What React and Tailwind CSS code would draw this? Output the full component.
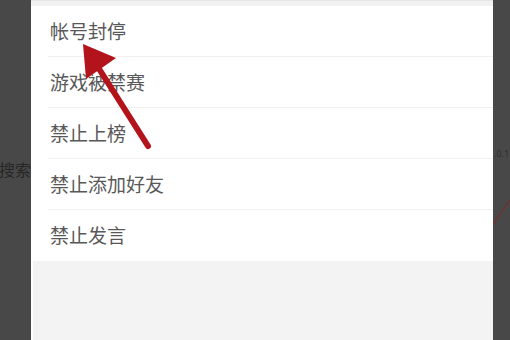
import React from "react";

const items = ["帐号封停", "游戏被禁赛", "禁止上榜", "禁止添加好友", "禁止发言"];

export default function App() {
  return (
    <div
      className="relative w-[510px] h-[340px] overflow-hidden bg-[#484848] flex"
      style={{ fontFamily: '"Noto Sans", "Noto Sans CJK SC", sans-serif' }}
    >
      {/* left strip */}
      <div className="w-[31px] shrink-0 flex flex-col overflow-hidden">
        <div className="h-[160px]" />
        <div className="flex justify-end whitespace-nowrap text-[16px] leading-[20px] text-[#262626]">
          搜索
        </div>
      </div>

      {/* panel */}
      <div className="w-[462px] shrink-0 flex flex-col bg-white">
        <div className="h-[6px] bg-[#f1f1f1] border-t border-[#e6e6e6]" />
        {items.map((t, i) => (
          <div key={t} className="h-[51px] pl-[17px] flex">
            <div
              className={
                "flex-1 flex items-center pl-[2px] pt-[2px] text-[19px] text-[#585858] " +
                (i < items.length - 1 ? "border-b border-[#f0f0f0]" : "")
              }
            >
              {t}
            </div>
          </div>
        ))}
        <div className="flex-1 bg-[#f3f3f3] ml-[2px]" />
      </div>

      {/* right strip */}
      <div className="flex-1 relative overflow-hidden">
        <div className="mt-[148px] pl-[1px] text-[9px] leading-[12px] text-[#2e2e2e] whitespace-nowrap">
          .0.1
        </div>
        <svg className="absolute left-0 top-[190px]" width="17" height="40" viewBox="0 0 17 40">
          <line x1="0" y1="34" x2="17" y2="10" stroke="#6b3434" strokeWidth="1.5" />
        </svg>
      </div>

      {/* red arrow overlay */}
      <svg
        className="absolute left-0 top-0 pointer-events-none"
        width="510"
        height="340"
        viewBox="0 0 510 340"
      >
        <line
          x1="96"
          y1="64"
          x2="148"
          y2="146"
          stroke="#b3141b"
          strokeWidth="6"
          strokeLinecap="round"
        />
        <polygon points="83,44 116,58 86,79" fill="#b3141b" />
      </svg>
    </div>
  );
}
